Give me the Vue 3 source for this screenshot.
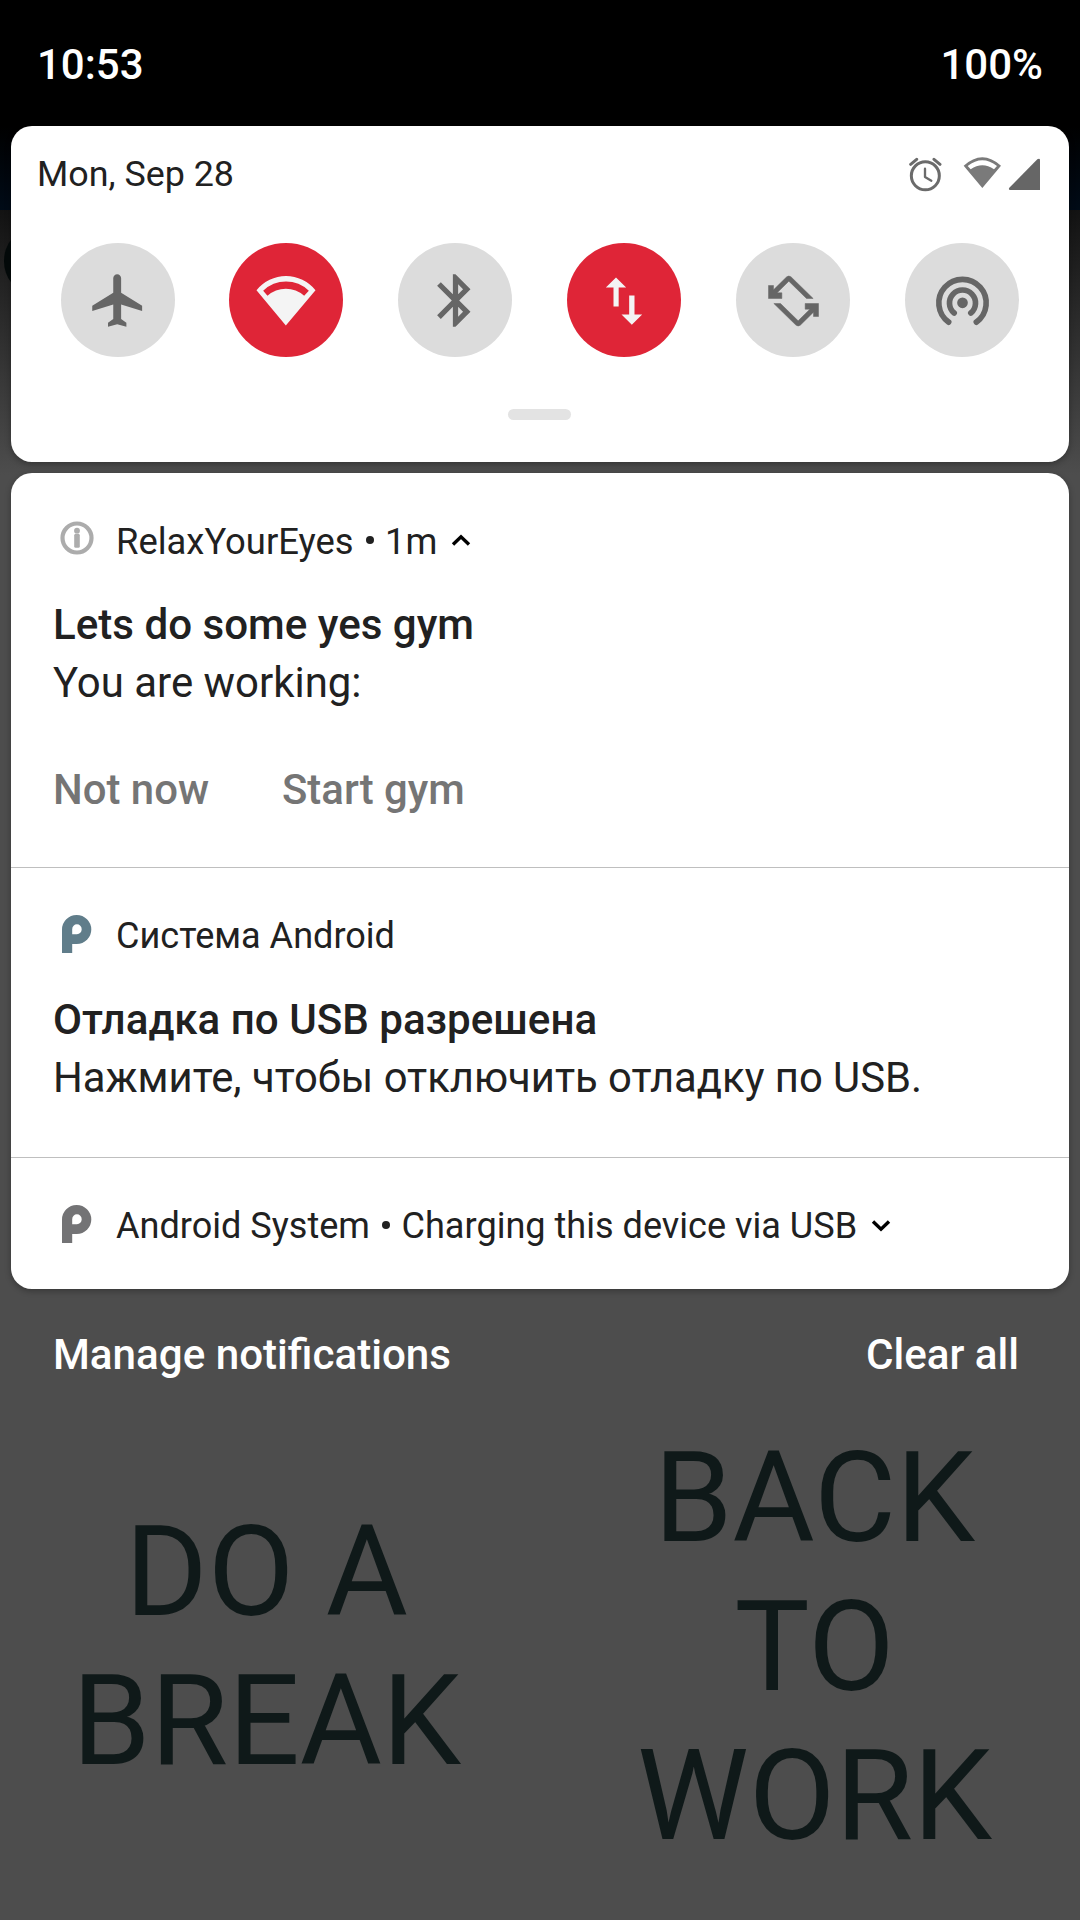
<script setup>
const tiles = [
  { name: 'airplane', active: false },
  { name: 'wifi', active: true },
  { name: 'bluetooth', active: false },
  { name: 'data', active: true },
  { name: 'rotate', active: false },
  { name: 'hotspot', active: false },
]
const rotateArrow =
  'M144 165H159V178L198 139.500Q205 133.500 212 139.500L278 204H258L205 152L170 187H184V204H144Z'
const logo =
  'M0 38V14.500A14.650 14.500 0 1 1 14.700 29H10.200V38ZM10.200 19.300V14.300A4.750 5 0 1 1 15 19.300Z'
</script>

<template>
  <div class="screen">
    <div class="app-bar-shade"></div>
    <div class="app-letter"></div>

    <header class="status">
      <span class="clock">10:53</span>
      <span class="battery">100%</span>
    </header>

    <section class="card quick">
      <div class="quick-head">
        <span class="date">Mon, Sep 28</span>
        <div class="sys-icons">
          <svg class="alarm" width="33" height="36" viewBox="27 21 99 108">
            <g fill="none" stroke="#6b6b6b" stroke-linecap="round">
              <circle cx="76" cy="77.500" r="42" stroke-width="9" />
              <path d="M75 56V81L94 92" stroke-width="7" stroke-linejoin="round" />
              <path d="M32 43L50 28M120 43L102 28" stroke-width="9" />
            </g>
          </svg>
          <svg class="net" width="39" height="36" viewBox="189 21 117 108">
            <path fill="#7a7a7a" fill-rule="evenodd" d="M247 114L191 47Q247 -4 303 47ZM203 48L212 58Q247 34 282 58L291 48Q247 13 203 48Z" />
          </svg>
          <svg width="33" height="36" viewBox="324 21 99 108">
            <path fill="#666" d="M331 120Q324 119 328 113L412 28Q420 24 420 31V120Z" />
          </svg>
        </div>
      </div>

      <div class="tiles">
        <div v-for="t in tiles" :key="t.name" class="tile" :class="{ on: t.active }">
          <svg v-if="t.name === 'airplane'" viewBox="0 0 24 24">
            <path d="M21 16v-2l-8-5V3.500C13 2.670 12.330 2 11.500 2S10 2.670 10 3.500V9l-8 5v2l8-2.500V19l-2 1.500V22l3.500-1 3.500 1v-1.500L13 19v-5.500L21 16z" />
          </svg>
          <svg v-else-if="t.name === 'wifi'" viewBox="613.500 115.500 189 189">
            <path fill-rule="evenodd" d="M706 285L618 179A114 114 0 0 1 795 179ZM638 181L651 196A82 82 0 0 1 761 196L775 181A97 97 0 0 0 638 181Z" />
          </svg>
          <svg v-else-if="t.name === 'bluetooth'" viewBox="0 0 24 24">
            <path d="M17.710 7.710L12 2h-1v7.590L6.410 5 5 6.410 10.590 12 5 17.590 6.410 19 11 14.410V22h1l5.710-5.710-4.300-4.290 4.300-4.290zM13 5.830l1.880 1.880L13 9.590V5.830zm1.880 10.460L13 18.170v-3.760l1.880 1.880z" />
          </svg>
          <svg v-else-if="t.name === 'data'" viewBox="607.500 115.500 189 189">
            <path d="M676.500 141L707 171H684.500V228H669V171H646ZM716 195H732V252H755L724 283L693 252H716Z" />
          </svg>
          <svg v-else-if="t.name === 'rotate'" class="rotate" viewBox="124.500 115.500 189 189">
            <path :d="rotateArrow" />
            <path :d="rotateArrow" transform="rotate(180 219 211.500)" />
          </svg>
          <svg v-else viewBox="631.500 115.500 189 189">
            <circle cx="726" cy="217" r="16" />
            <g fill="none" stroke="#666" stroke-width="17" stroke-linecap="round">
              <path d="M701 247.500A39 39 0 1 1 751 247.500" />
              <path d="M684.500 275A71 71 0 1 1 767.500 275" />
            </g>
          </svg>
        </div>
      </div>
      <div class="handle"></div>
    </section>

    <section class="card list">
      <article class="note first">
        <div class="note-head relax">
          <svg class="info" width="34" height="34" viewBox="0 0 34 34">
            <circle cx="17" cy="17" r="14.500" fill="none" stroke="#acacac" stroke-width="4.200" />
            <rect x="14.200" y="12.800" width="5.600" height="14" rx="1.500" fill="#acacac" />
            <circle cx="17" cy="9.700" r="2.900" fill="#acacac" />
          </svg>
          <span class="app">RelaxYourEyes</span>
          <i class="dot"></i>
          <span class="app">1m</span>
          <svg class="chev up" width="20" height="12" viewBox="0 0 20 12">
            <path d="M2 10.500L10 2.800L18 10.500" fill="none" stroke="#000" stroke-width="3.400" />
          </svg>
        </div>
        <div class="title">Lets do some yes gym</div>
        <div class="body">You are working:</div>
        <div class="actions">
          <span class="not-now">Not now</span>
          <span>Start gym</span>
        </div>
      </article>

      <article class="note second">
        <div class="note-head">
          <svg class="logo" width="30" height="38" viewBox="0 0 30 38">
            <path fill="#607d8a" fill-rule="evenodd" :d="logo" />
          </svg>
          <span class="app">Система Android</span>
        </div>
        <div class="title">Отладка по USB разрешена</div>
        <div class="body">Нажмите, чтобы отключить отладку по USB.</div>
      </article>

      <article class="note third">
        <div class="note-head">
          <svg class="logo" width="30" height="38" viewBox="0 0 30 38">
            <path fill="#737375" fill-rule="evenodd" :d="logo" />
          </svg>
          <span class="app">Android System</span>
          <i class="dot"></i>
          <span class="app">Charging this device via USB</span>
          <svg class="chev" width="20" height="12" viewBox="0 0 20 12">
            <path d="M2 1.500L10 9.200L18 1.500" fill="none" stroke="#000" stroke-width="3.400" />
          </svg>
        </div>
      </article>
    </section>

    <div class="footer">
      <span>Manage notifications</span>
      <span>Clear all</span>
    </div>

    <div class="buttons">
      <div class="big break">DO A<br />BREAK</div>
      <div class="big work">BACK<br />TO<br />WORK</div>
    </div>
  </div>
</template>

<style>
body { margin: 0; background: #4d4d4d; }
</style>

<style scoped>
.screen {
  position: relative;
  box-sizing: border-box;
  width: 1080px;
  height: 1920px;
  overflow: hidden;
  display: flex;
  flex-direction: column;
  background: linear-gradient(#000 126px, #4d4d4d 475px);
  font-family: Roboto, "Noto Sans", sans-serif;
  color: #212121;
  white-space: nowrap;
}
svg { display: block; flex: none; }
.app-bar-shade {
  position: absolute;
  left: 0;
  top: 126px;
  width: 1080px;
  height: 84px;
  background: linear-gradient(#000, #000b17);
}
.app-letter {
  position: absolute;
  left: 4px;
  top: 231px;
  width: 48px;
  height: 60px;
  border-radius: 50%;
  background: #040a0a;
}
.status {
  position: relative;
  box-sizing: border-box;
  height: 126px;
  flex: none;
  padding: 40px 37px 0;
  display: flex;
  justify-content: space-between;
  font-size: 42px;
  line-height: 50px;
  font-weight: 500;
  color: #fff;
}
.card {
  position: relative;
  flex: none;
  box-sizing: border-box;
  margin: 0 11px;
  background: #fff;
  border-radius: 21px;
  box-shadow: 0 2px 6px rgba(0, 0, 0, 0.3);
}
.quick { height: 336px; padding-top: 23px; }
.quick-head {
  display: flex;
  justify-content: space-between;
  align-items: flex-start;
  height: 48px;
  padding: 0 28px 0 26px;
}
.date { font-size: 35.85px; line-height: 50px; }
.sys-icons { display: flex; margin-top: 8px; }
.net { margin: 0 6px 0 21px; }
.tiles {
  display: grid;
  grid-template-columns: 168px repeat(4, 169px) 114px;
  padding-left: 50px;
  margin-top: 46px;
}
.tile {
  width: 114px;
  height: 114px;
  border-radius: 50%;
  background: #dcdcdc;
  display: flex;
  align-items: center;
  justify-content: center;
  fill: #666;
}
.tile.on { background: #df2537; fill: #f4f4f4; }
.tile svg { width: 63px; height: 63px; }
.rotate path { stroke: #666; stroke-width: 1.5; }
.handle {
  width: 63px;
  height: 11px;
  margin: 52px 0 0 497px;
  border-radius: 5.5px;
  background: #e3e3e3;
}
.list { height: 816px; margin-top: 11px; }
.note { box-sizing: border-box; padding-left: 42px; }
.first { height: 395px; padding-top: 45px; border-bottom: 1px solid #bfbfbf; }
.second { height: 290px; padding-top: 45px; border-bottom: 1px solid #bfbfbf; }
.third { padding-top: 45px; }
.note-head {
  display: flex;
  align-items: center;
  height: 45px;
  font-size: 36.1px;
}
.relax { font-size: 36.4px; }
.app { line-height: 45px; padding-top: 2px; }
.info { margin: -5px 22.5px 0 6.5px; }
.logo { margin: -4px 24.5px 0 8.5px; }
.dot {
  width: 8px;
  height: 8px;
  border-radius: 50%;
  background: #212121;
  margin: -1px 11.5px 0 12px;
}
.chev { margin-left: 13.5px; }
.up { margin-top: -2px; }
.title {
  margin-top: 37px;
  height: 58px;
  font-size: 42.12px;
  line-height: 50px;
  font-weight: 500;
}
.body { font-size: 41.8px; line-height: 50px; }
.first .body { font-size: 41.95px; }
.actions {
  display: flex;
  margin-top: 57px;
  font-size: 41.9px;
  line-height: 50px;
  font-weight: 500;
  color: #757575;
}
.not-now { width: 229px; }
.footer {
  position: relative;
  display: flex;
  justify-content: space-between;
  flex: none;
  margin-top: 41px;
  padding: 0 61px 0 53px;
  font-size: 42.15px;
  line-height: 50px;
  font-weight: 500;
  color: #fff;
}
.buttons {
  flex: none;
  display: flex;
  align-items: center;
  margin-top: 43.5px;
  height: 447px;
}
.big {
  text-align: center;
  font-size: 126px;
  line-height: 149px;
  color: #0f1919;
}
.break { flex: 0 0 533px; }
.work { flex: 1; margin-left: 16px; }
</style>
